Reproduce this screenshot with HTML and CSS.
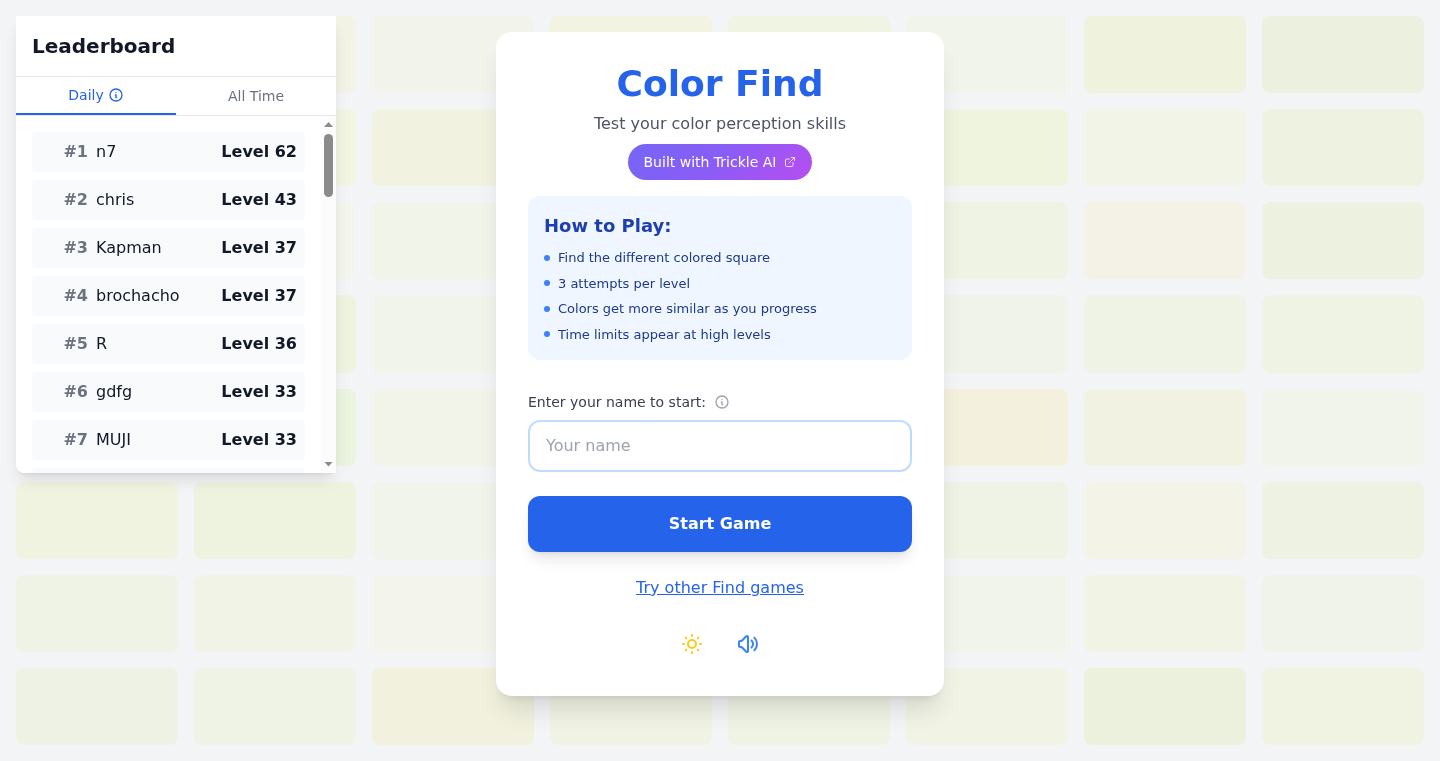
FILE: index.html
```html
<!DOCTYPE html>
<html lang="en">
<head>
  <meta charset="UTF-8" />
  <meta name="viewport" content="width=device-width, initial-scale=1" />
  <title>Color Find</title>
  <link rel="stylesheet" href="styles.css">
</head>
<body>

  <!-- Background squares, filled by script.js -->
  <div class="background-grid" id="background-grid" aria-hidden="true"></div>

  <!-- Leaderboard -->
  <aside class="leaderboard">
    <h2 class="leaderboard-title">Leaderboard</h2>
    <div class="tabs">
      <button class="tab active" type="button">
        Daily
        <svg class="icon-small" viewBox="0 0 24 24"><path d="M13 16h-1v-4h-1m1-4h.01M21 12a9 9 0 11-18 0 9 9 0 0118 0z"/></svg>
      </button>
      <button class="tab" type="button">All Time</button>
    </div>
    <div class="scores-area">
      <ol class="scores">
        <li class="score"><span class="rank">#1</span><span>n7</span><span class="level">Level 62</span></li>
        <li class="score"><span class="rank">#2</span><span>chris</span><span class="level">Level 43</span></li>
        <li class="score"><span class="rank">#3</span><span>Kapman</span><span class="level">Level 37</span></li>
        <li class="score"><span class="rank">#4</span><span>brochacho</span><span class="level">Level 37</span></li>
        <li class="score"><span class="rank">#5</span><span>R</span><span class="level">Level 36</span></li>
        <li class="score"><span class="rank">#6</span><span>gdfg</span><span class="level">Level 33</span></li>
        <li class="score"><span class="rank">#7</span><span>MUJI</span><span class="level">Level 33</span></li>
        <li class="score"></li>
      </ol>
      <div class="scrollbar" aria-hidden="true">
        <span class="arrow-up"></span>
        <span class="thumb"></span>
        <span class="arrow-down"></span>
      </div>
    </div>
  </aside>

  <!-- Start screen -->
  <main class="start-card">
    <h1>Color Find</h1>
    <p class="subtitle">Test your color perception skills</p>
    <a class="trickle-badge" href="#">
      Built with Trickle AI
      <svg class="icon-tiny" viewBox="0 0 24 24"><path d="M18 13v6a2 2 0 01-2 2H5a2 2 0 01-2-2V8a2 2 0 012-2h6M15 3h6v6M10 14L21 3"/></svg>
    </a>

    <section class="how-to">
      <h2>How to Play:</h2>
      <ul>
        <li>Find the different colored square</li>
        <li>3 attempts per level</li>
        <li>Colors get more similar as you progress</li>
        <li>Time limits appear at high levels</li>
      </ul>
    </section>

    <form class="start-form" onsubmit="return false">
      <div class="name-label">
        <label for="player-name">Enter your name to start:</label>
        <svg class="icon-small" viewBox="0 0 24 24"><path d="M13 16h-1v-4h-1m1-4h.01M21 12a9 9 0 11-18 0 9 9 0 0118 0z"/></svg>
      </div>
      <input class="name-input" id="player-name" type="text" placeholder="Your name" />
      <button class="start-button" type="submit">Start Game</button>
    </form>

    <a class="other-games" href="#">Try other Find games</a>

    <div class="settings">
      <button class="icon-button theme" type="button" aria-label="Toggle theme">
        <svg viewBox="0 0 24 24"><path d="M12 3v1m0 16v1m9-9h-1M4 12H3m15.364 6.364l-.707-.707M6.343 6.343l-.707-.707m12.728 0l-.707.707M6.343 17.657l-.707.707M16 12a4 4 0 11-8 0 4 4 0 018 0z"/></svg>
      </button>
      <button class="icon-button sound" type="button" aria-label="Toggle sound">
        <svg viewBox="0 0 24 24"><path d="M15.536 8.464a5 5 0 010 7.072m2.828-9.9a9 9 0 010 12.728M5.586 15H4a1 1 0 01-1-1v-4a1 1 0 011-1h1.586l4.707-4.707C10.923 3.663 12 4.109 12 5v14c0 .891-1.077 1.337-1.707.707L5.586 15z"/></svg>
      </button>
    </div>
  </main>

  <script src="script.js"></script>
</body>
</html>
```
FILE: styles.css
```css
* {
  margin: 0;
  padding: 0;
  box-sizing: border-box;
}

body {
  min-height: 100vh;
  padding: 32px 16px;
  font-family: "DejaVu Sans", sans-serif;
  font-size: 16px;
  line-height: 24px;
  background: #f3f4f6;
  color: #111827;
}

button, input {
  font: inherit;
  border: none;
  background: none;
}

button {
  cursor: pointer;
}

svg {
  display: block;
  width: 24px;
  height: 24px;
  fill: none;
  stroke: currentColor;
  stroke-width: 2;
  stroke-linecap: round;
  stroke-linejoin: round;
}

.icon-small {
  width: 16px;
  height: 16px;
}

.icon-tiny {
  width: 12px;
  height: 12px;
  opacity: 0.8;
}

/* Background */
.background-grid {
  position: fixed;
  inset: 0;
  z-index: -1;
  display: grid;
  grid-template-columns: repeat(8, 1fr);
  grid-template-rows: repeat(8, 1fr);
  gap: 16px;
  padding: 16px;
}

.square {
  border-radius: 8px;
}

/* Leaderboard */
.leaderboard {
  position: fixed;
  top: 16px;
  left: 16px;
  display: flex;
  flex-direction: column;
  width: 320px;
  max-height: 60vh;
  background: #fff;
  border-radius: 0 0 8px 8px;
  box-shadow: 0 10px 15px -3px rgba(0,0,0,0.1), 0 4px 6px -4px rgba(0,0,0,0.1);
}

.leaderboard-title {
  padding: 16px;
  font-size: 20px;
  line-height: 28px;
  border-bottom: 1px solid #e5e7eb;
}

.tabs {
  display: flex;
  border-bottom: 1px solid #e5e7eb;
}

.tab {
  flex: 1;
  display: flex;
  align-items: center;
  justify-content: center;
  gap: 4px;
  padding: 8px 16px;
  font-size: 14px;
  line-height: 20px;
  color: #6b7280;
}

.tab.active {
  color: #2563eb;
  border-bottom: 2px solid #2563eb;
}

.scores-area {
  flex: 1;
  display: flex;
  min-height: 0;
}

.scores {
  flex: 1;
  overflow-y: auto;
  scrollbar-width: none;
  padding: 16px;
  list-style: none;
}

.score {
  display: flex;
  align-items: center;
  height: 40px;
  margin-bottom: 8px;
  padding: 8px;
  background: #f9fafb;
  border-radius: 4px;
}

.rank {
  width: 48px;
  margin-right: 8px;
  text-align: right;
  font-weight: bold;
  color: #6b7280;
}

.level {
  margin-left: auto;
  font-weight: bold;
}

.scrollbar {
  display: flex;
  flex-direction: column;
  align-items: center;
  gap: 7px;
  width: 15px;
  padding: 6px 0;
  background: #fcfcfc;
}

.arrow-up, .arrow-down {
  width: 9px;
  height: 5px;
  background: #8b8b8b;
  clip-path: polygon(50% 0, 100% 100%, 0 100%);
}

.arrow-down {
  margin-top: auto;
  clip-path: polygon(0 0, 100% 0, 50% 100%);
}

.thumb {
  width: 9px;
  height: 63px;
  background: #8b8b8b;
  border-radius: 5px;
}

/* Start card */
.start-card {
  display: flex;
  flex-direction: column;
  align-items: center;
  max-width: 448px;
  margin: 0 auto;
  padding: 32px;
  background: #fff;
  border-radius: 16px;
  box-shadow: 0 20px 25px -5px rgba(0,0,0,0.1), 0 8px 10px -6px rgba(0,0,0,0.1);
}

.start-card h1 {
  margin-bottom: 8px;
  font-size: 36px;
  line-height: 40px;
  color: #2563eb;
}

.subtitle {
  margin-bottom: 8px;
  color: #4b5563;
}

.trickle-badge {
  display: flex;
  align-items: center;
  gap: 8px;
  margin-bottom: 16px;
  padding: 8px 16px;
  font-size: 14px;
  line-height: 20px;
  color: #fff;
  text-decoration: none;
  background: linear-gradient(135deg, #7566f5, #8b5cf6 50%, #b84df0);
  border-radius: 18px;
}

.how-to {
  width: 100%;
  margin-bottom: 32px;
  padding: 16px;
  background: #eff6ff;
  border-radius: 12px;
}

.how-to h2 {
  margin-bottom: 8px;
  font-size: 18px;
  line-height: 28px;
  color: #1e40af;
}

.how-to ul {
  display: grid;
  gap: 6px;
  list-style: none;
}

.how-to li {
  display: flex;
  align-items: center;
  gap: 8px;
  font-size: 13px;
  line-height: 1.5;
  color: #1e3a8a;
}

.how-to li::before {
  content: "";
  width: 6px;
  height: 6px;
  background: #3b82f6;
  border-radius: 50%;
}

.start-form {
  width: 100%;
  margin-bottom: 24px;
}

.name-label {
  display: flex;
  align-items: center;
  gap: 8px;
  margin-bottom: 8px;
  font-size: 14px;
  line-height: 20px;
  color: #374151;
}

.name-label svg {
  color: #9ca3af;
}

.name-input {
  display: block;
  width: 100%;
  margin-bottom: 24px;
  padding: 12px 16px;
  background: #fff;
  border: 2px solid #bfdbfe;
  border-radius: 12px;
}

.name-input::placeholder {
  color: #9ca3af;
}

.start-button {
  display: block;
  width: 100%;
  padding: 16px;
  font-weight: bold;
  color: #fff;
  background: #2563eb;
  border-radius: 12px;
  box-shadow: 0 10px 15px -3px rgba(0,0,0,0.1), 0 4px 6px -4px rgba(0,0,0,0.1);
}

.other-games {
  margin-bottom: 24px;
  color: #2563eb;
}

.settings {
  display: flex;
  gap: 16px;
}

.icon-button {
  padding: 8px;
}

.theme {
  color: #facc15;
}

.sound {
  color: #3b82f6;
}
```
FILE: script.js
```js
const colors = [
  "#f1f3e3", "#f3f3e5", "#f2f4eb", "#f2f3e1", "#f0f4e2", "#f0f4ea", "#eff2dc", "#ecf1df",
  "#eef3e0", "#f0f4e1", "#f1f2e0", "#f0f3e0", "#eef3e0", "#eef4de", "#f2f4e7", "#eef3e1",
  "#eef3e0", "#f3f4eb", "#f0f4e9", "#f0f3e0", "#eef3e0", "#eef3e3", "#f4f2e7", "#edf1e0",
  "#eef3e0", "#eef3df", "#f1f4ea", "#f0f3e0", "#eef3e0", "#f0f3e9", "#eff3e5", "#eff3e4",
  "#eef3e0", "#eaf3de", "#f2f4ea", "#f0f3e0", "#eef3e0", "#f3f1dd", "#f1f2e2", "#f0f4ea",
  "#eff3df", "#edf3de", "#f0f4ea", "#f0f3e0", "#eef3e0", "#eff3e5", "#f4f3e7", "#eef2e2",
  "#eff3e5", "#f1f3e6", "#f3f4ec", "#f0f3e0", "#eef3e0", "#f1f4eb", "#f1f3e5", "#f0f3ea",
  "#eef2e4", "#eff3e5", "#f1f1de", "#f0f3e3", "#eef3e4", "#f1f3e5", "#ebf1dd", "#f0f3e1",
];

const grid = document.getElementById("background-grid");
for (const color of colors) {
  const square = document.createElement("div");
  square.className = "square";
  square.style.background = color;
  grid.appendChild(square);
}
```
